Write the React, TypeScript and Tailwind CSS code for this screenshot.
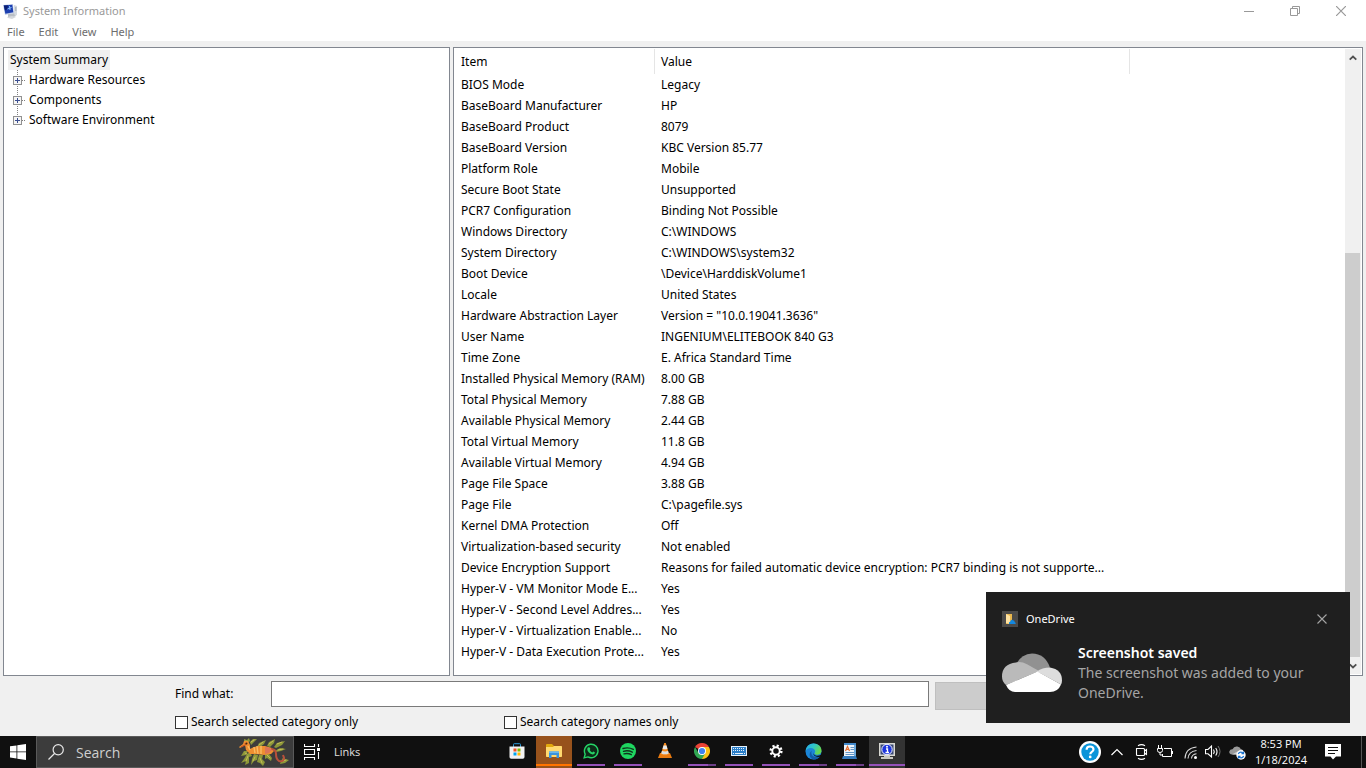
import type { ReactNode } from "react";

const rows: [string, string][] = [
  ["BIOS Mode", "Legacy"],
  ["BaseBoard Manufacturer", "HP"],
  ["BaseBoard Product", "8079"],
  ["BaseBoard Version", "KBC Version 85.77"],
  ["Platform Role", "Mobile"],
  ["Secure Boot State", "Unsupported"],
  ["PCR7 Configuration", "Binding Not Possible"],
  ["Windows Directory", "C:\\WINDOWS"],
  ["System Directory", "C:\\WINDOWS\\system32"],
  ["Boot Device", "\\Device\\HarddiskVolume1"],
  ["Locale", "United States"],
  ["Hardware Abstraction Layer", 'Version = "10.0.19041.3636"'],
  ["User Name", "INGENIUM\\ELITEBOOK 840 G3"],
  ["Time Zone", "E. Africa Standard Time"],
  ["Installed Physical Memory (RAM)", "8.00 GB"],
  ["Total Physical Memory", "7.88 GB"],
  ["Available Physical Memory", "2.44 GB"],
  ["Total Virtual Memory", "11.8 GB"],
  ["Available Virtual Memory", "4.94 GB"],
  ["Page File Space", "3.88 GB"],
  ["Page File", "C:\\pagefile.sys"],
  ["Kernel DMA Protection", "Off"],
  ["Virtualization-based security", "Not enabled"],
  ["Device Encryption Support", "Reasons for failed automatic device encryption: PCR7 binding is not supporte..."],
  ["Hyper-V - VM Monitor Mode E...", "Yes"],
  ["Hyper-V - Second Level Addres...", "Yes"],
  ["Hyper-V - Virtualization Enable...", "No"],
  ["Hyper-V - Data Execution Prote...", "Yes"],
];

function TitleIcon() {
  return (
    <svg width="16" height="16" viewBox="0 0 16 16" aria-hidden="true">
      <path d="M5 10l7-1 1 3-5 2-3-1z" fill="#b9bec4" />
      <path d="M4 13l5-1 4 1-4 2-4-1z" fill="#d5d8dc" />
      <path d="M0 1l10-1 1 9-9 2z" fill="#c3cfe8" />
      <path d="M.8 1.500L9.300.8l1 7.400-8 1.500z" fill="#1d3fb0" />
      <path d="M.8 1.500L5 1.200 4.500 5 2 6.500z" fill="#0c2173" />
      <path d="M6.500 2l.5 4M4.500 5l4-1.500" stroke="#8cc4ff" strokeWidth="1" />
      <path d="M11 1l3 1v9l-2 1-1-3z" fill="#d5dae0" />
      <path d="M12 4h1.500M12 6h1.500" stroke="#8d98a4" />
    </svg>
  );
}

function Expander({ last }: { last: boolean }) {
  return (
    <svg width="19" height="20" viewBox="0 0 19 20" aria-hidden="true" shapeRendering="crispEdges">
      <path d={last ? "M9.5 0V6" : "M9.5 0V20"} stroke="#808080" strokeDasharray="1 1" />
      <path d="M14 10.5h4" stroke="#808080" strokeDasharray="1 1" />
      <rect x="5.500" y="6.500" width="8" height="8" fill="#f6f6f6" stroke="#919191" />
      <path d="M7 10.500h5M9.500 8v5" stroke="#3c4f91" />
    </svg>
  );
}

function StoreIcon() {
  return (
    <svg width="16" height="16" viewBox="0 0 16 16" aria-hidden="true">
      <path d="M4.500 4V1.500q0-.8.8-.8h5.400q.8 0 .8.800V4" fill="none" stroke="#2d9ad8" />
      <path d="M.5 3.500h15V14q0 1.700-1.700 1.700H2.200Q.5 15.700.5 14z" fill="#f2f2f2" />
      <path d="M4.500 5.500h3v3h-3z" fill="#f25022" />
      <path d="M8.500 5.500h3v3h-3z" fill="#7fba00" />
      <path d="M4.500 9.500h3v3h-3z" fill="#00a4ef" />
      <path d="M8.500 9.500h3v3h-3z" fill="#ffb900" />
    </svg>
  );
}

function FolderIcon() {
  return (
    <svg width="16" height="16" viewBox="0 0 16 16" aria-hidden="true">
      <path d="M0 2q0-1 1-1h5l2 2h7q1 0 1 1v9q0 1-1 1H1q-1 0-1-1z" fill="#e2a90d" />
      <path d="M0 4h7l1-1h7q1 0 1 1v9q0 1-1 1H1q-1 0-1-1z" fill="#ffd970" />
      <path d="M3 8.500h10V15h-2.500v-3h-5v3H3z" fill="#3a93dd" />
      <path d="M3 8.500h10v1.500H3z" fill="#67b7f0" />
    </svg>
  );
}

function WhatsAppIcon() {
  return (
    <svg width="16" height="16" viewBox="0 0 17 17" aria-hidden="true">
      <path d="M1.200 15.800l1.100-4A7.200 7.200 0 1 1 5.200 14.800z" fill="#0d2b18" stroke="#25d366" strokeWidth="1.500" />
      <path d="M5.800 4.500l1.300.2.7 1.700-.7 1c.7 1.300 1.500 2 2.800 2.600l1-1 1.700.8c.2 1.500-1 2.400-2.400 2.300-3-.5-5.500-3-5.700-5.400 0-1 .5-1.800 1.300-2.200z" fill="#25d366" />
    </svg>
  );
}

function SpotifyIcon() {
  return (
    <svg width="16" height="16" viewBox="0 0 16 16" aria-hidden="true">
      <circle cx="8" cy="8" r="8" fill="#1ed760" />
      <path d="M3 5.500q5.500-1.700 10.300.9M3.500 8.300q4.700-1.300 8.800.9M4 10.900q4-1 7.300.8" fill="none" stroke="#10331c" strokeWidth="1.400" strokeLinecap="round" />
    </svg>
  );
}

function VlcIcon() {
  return (
    <svg width="16" height="16" viewBox="0 0 16 16" aria-hidden="true">
      <path d="M3 10h10l2 5H1z" fill="#e87a10" />
      <path d="M7.200 0h1.600L12 11q-4 2.500-8 0z" fill="#f58a1c" />
      <path d="M6.500 2.500h3l1 3.200q-2.500 1-5 0z" fill="#e9e9e9" />
      <path d="M5 7.800q3 1.200 6 0l.8 2.600q-3.800 1.700-7.600 0z" fill="#dedede" />
    </svg>
  );
}

function ChromeIcon() {
  return (
    <svg width="16" height="16" viewBox="0 0 16 16" aria-hidden="true">
      <path d="M8 8L1.070 4A8 8 0 0 1 14.930 4z" fill="#e94235" />
      <path d="M8 8V4h6.930A8 8 0 0 1 8 16z" fill="#fbc116" />
      <path d="M1.070 4L4.540 10 8 12l3.460-2L8 16A8 8 0 0 1 1.070 4z" fill="#31a753" />
      <circle cx="8" cy="8" r="4" fill="#fff" />
      <circle cx="8" cy="8" r="3.100" fill="#3f83f0" />
    </svg>
  );
}

function KeyboardIcon() {
  return (
    <svg width="16" height="10" viewBox="0 0 16 10" aria-hidden="true" shapeRendering="crispEdges">
      <rect width="16" height="10" fill="#e7f2fb" />
      <rect x="1" y="1" width="14" height="8" fill="#2b7fc9" />
      <path d="M2 2.500h12M2 4.500h12" stroke="#e7f2fb" strokeDasharray="1 1" />
      <path d="M2 7.500h1M4 7.500h8M13 7.500h1" stroke="#e7f2fb" />
    </svg>
  );
}

function GearIcon() {
  return (
    <svg width="14" height="14" viewBox="0 0 14 14" aria-hidden="true">
      <circle cx="7" cy="7" r="5.300" fill="none" stroke="#fff" strokeWidth="2.600" strokeDasharray="2.100 2.060" />
      <circle cx="7" cy="7" r="3.700" fill="none" stroke="#fff" strokeWidth="1.900" />
    </svg>
  );
}

function EdgeIcon() {
  return (
    <svg width="17" height="17" viewBox="0 0 17 17" aria-hidden="true">
      <defs>
        <linearGradient id="edge-top" x1="0" y1="0" x2="1" y2="0.500">
          <stop offset="0" stopColor="#25a9e8" />
          <stop offset="0.500" stopColor="#2fc6c8" />
          <stop offset="1" stopColor="#68d84a" />
        </linearGradient>
      </defs>
      <circle cx="8.500" cy="8.500" r="8" fill="#1b86d8" />
      <path d="M.6 8C1 3.500 4.500.5 8.500.5c4.600 0 8 3.200 8 7 0 3-2.500 4.200-4.500 4.200-1.600 0-2.500-.5-2.500-1.200 0-.6.700-.8.700-2C10.200 6.500 8.200 5 5.800 5 3.200 5 1.200 6.500.6 8z" fill="url(#edge-top)" />
      <path d="M6.800 7.500c-1.400 3 .4 6.500 4.400 6.500 1.700 0 3-.4 4.100-1.100-1.500 2.400-4 3.600-6.800 3.600-4-1-5.500-6-1.700-9z" fill="#125ba6" />
      <path d="M8.500 8.500c-.8 2.700 1.300 4.200 3.700 4.200 1.500 0 2.900-.5 4.300-1.500V13.200c-4.500 2-9.400-.2-8-4.700z" fill="#111" />
    </svg>
  );
}

function WordPadIcon() {
  return (
    <svg width="16" height="16" viewBox="0 0 16 16" aria-hidden="true">
      <path d="M2 0h12v13H2z" fill="#eef5fb" />
      <path d="M2 0h12v2H2z" fill="#4289cb" />
      <path d="M12 2h2v11h-2z" fill="#6caadd" />
      <path d="M1 13h13l1 3H0z" fill="#347abc" />
      <path d="M3.500 8L5.500 3.500 7.500 8M4.300 6.500h2.500" stroke="#e76d2d" fill="none" strokeWidth="1.200" />
      <path d="M8.500 4.500H12M8.500 6.500H12M3.500 9.500H12M3.500 11.500H12" stroke="#6597c6" />
    </svg>
  );
}

function SysInfoIcon() {
  return (
    <svg width="16" height="16" viewBox="0 0 16 16" aria-hidden="true">
      <path d="M0 0h16v13H0z" fill="#d8d8d2" />
      <path d="M1.500 1.500h13v10h-13z" fill="#3b4a78" />
      <path d="M5 13h6v1h3v2H2v-2h3z" fill="#c8c8c0" />
      <circle cx="8" cy="6.500" r="5.200" fill="#1d35dc" stroke="#e9edff" />
      <path d="M7 6h1.500v3.500M6.500 9.500h3.500" stroke="#fff" strokeWidth="1.300" fill="none" />
      <circle cx="8" cy="3.700" r="1" fill="#fff" />
    </svg>
  );
}

function SeaDragon() {
  return (
    <svg width="50" height="30" viewBox="0 0 50 30" aria-hidden="true">
      <g fill="#8d9738">
        <path d="M5 5l0-3 3 1 2-2 1 3-2 2zM11 5l3-3 4 0-3 3-3 3zM18 10l2-4 7-3-2 4-5 4zM28 9l2-4 6-3-1 4-4 4zM35 10l3-4 8-2-3 4-6 3zM36 14l5-3 6 1-5 2-5 1z" />
        <path d="M5 14l4 0-2 4-5 1zM8 17l3-2 2 4-3 1 0 6-4 2 1-4-5 2 3-4zM15 17l4 1-1 5-3 1-3 4 1-6zM20 18l4 0-1 4 3 3-2 4-3-3-3-1zM26 17l4 0 3 4-1 3-4-3-2 1zM42 24l3-5 1 3 4 1-4 3-5 1z" />
      </g>
      <g fill="none" stroke="#c6bd59" strokeLinecap="round">
        <path d="M7 4l1 2M12 5l3-2M20 8l4-3M30 7l4-3M38 7l5-2M39 13l5-1M6 16l2 1M9 19l-2 5M16 20l-2 4M21 21l2 5M28 18l3 3M44 24l3-1" />
      </g>
      <path d="M0 10l4-3 1-3 4 0 2 4 0 4 4-2 5-1 6 0 7 2 2 3-3 3-7 1-8-1-6 0-4-4-1-5-2 1-3 2z" fill="#ee8f31" />
      <path d="M32 12q5 0 5 5t3 7q5 1 5-3l-1-3" fill="none" stroke="#b9503b" strokeWidth="2" />
      <path d="M26 10q5 0 7 3l-3 3-4 1z" fill="#dd7456" />
      <path d="M15 10l1 6M18 9l1 8M22 9v8M9 9l2 4" stroke="#f8bb61" strokeWidth="1.400" fill="none" />
      <path d="M2 10l4-2M6 6l1 2" stroke="#cf5520" strokeWidth="1.200" />
      <circle cx="7.500" cy="6.500" r="1" fill="#43260c" />
    </svg>
  );
}

type App = { label: string; icon: ReactNode; state: "none" | "one" | "many" | "alert" | "active" };

const apps: App[] = [
  { label: "Microsoft Store", icon: <StoreIcon />, state: "none" },
  { label: "File Explorer", icon: <FolderIcon />, state: "alert" },
  { label: "WhatsApp", icon: <WhatsAppIcon />, state: "one" },
  { label: "Spotify", icon: <SpotifyIcon />, state: "one" },
  { label: "VLC media player", icon: <VlcIcon />, state: "none" },
  { label: "Google Chrome", icon: <ChromeIcon />, state: "many" },
  { label: "On-Screen Keyboard", icon: <KeyboardIcon />, state: "one" },
  { label: "Settings", icon: <GearIcon />, state: "one" },
  { label: "Microsoft Edge", icon: <EdgeIcon />, state: "many" },
  { label: "WordPad", icon: <WordPadIcon />, state: "many" },
  { label: "System Information", icon: <SysInfoIcon />, state: "active" },
];

function TaskButton({ app }: { app: App }) {
  const tile = app.state === "alert" ? "bg-[#97521c]" : app.state === "active" ? "bg-[#333333]" : "";
  return (
    <button aria-label={app.label} className={`flex h-8 w-9 flex-col items-center pb-0.5 ${tile}`}>
      <span className="flex h-7 shrink-0 items-center justify-center pt-0.5">{app.icon}</span>
      {app.state === "alert" && <span className="h-0.5 w-full bg-[#ff7300]" />}
      {app.state === "active" && <span className="h-0.5 w-full bg-[#9451b8]" />}
      {app.state === "one" && <span className="h-0.5 w-7 bg-[#9451b8]" />}
      {app.state === "many" && (
        <span className="flex h-0.5 w-7">
          <span className="flex-1 bg-[#9451b8]" />
          <span className="w-2 bg-[#6e3f88]" />
        </span>
      )}
    </button>
  );
}

function CheckOption({ label, className }: { label: string; className?: string }) {
  return (
    <label className={`flex items-center gap-[3px] ${className ?? ""}`}>
      <input type="checkbox" className="size-[13px] shrink-0 appearance-none border border-[#333] bg-white checked:bg-[#0078d7]" />
      {label}
    </label>
  );
}

function Toast() {
  return (
    <aside className="absolute right-4 bottom-[45px] flex h-[131px] w-[364px] flex-col bg-[#1f1f1f] px-4 text-white">
      <div className="flex h-[51px] items-center gap-2 pt-[3px] text-[11px]">
        <svg width="16" height="16" viewBox="0 0 16 16" aria-hidden="true">
          <path d="M0 0h16v16H0z" fill="#4b4a49" />
          <path d="M4 3h6v10H4z" fill="#e8b64c" />
          <path d="M4 3l4 2v8l-4-1z" fill="#ffe2a0" />
          <path d="M7 13q-.8-2 1.300-2.500Q9 8 11 9.300q1.800 0 1.700 1.700 1.200.3 1 2z" fill="#1388df" />
        </svg>
        <span>OneDrive</span>
        <button aria-label="Dismiss notification" className="mr-[2px] ml-auto flex size-5 items-center justify-center">
          <svg width="10" height="10" viewBox="0 0 10 10" aria-hidden="true">
            <path d="M.5.500l9 9M9.500.500l-9 9" stroke="#a5a5a5" strokeWidth="1.100" />
          </svg>
        </button>
      </div>
      <div className="flex gap-4">
        <svg width="60" height="40" viewBox="0 0 60 40" className="mt-[10px]" aria-hidden="true">
          <path d="M14 11Q20 .5 30 .5q13 0 18 14L37 20z" fill="#919191" />
          <path d="M14 9.500q5-1.500 11 1.800L37 18 4 32q-4-3-4-8.500Q0 11 14 9.500z" fill="#bababa" />
          <path d="M35 18.500q5-4 13-4 12 2 12 13 0 2-1 4z" fill="#dddddd" />
          <path d="M35.500 18.500L59 31.500Q56 39 48 39H13Q7 39 4 32z" fill="#fff" />
        </svg>
        <div className="text-[14px] leading-5">
          <h2 className="font-semibold">Screenshot saved</h2>
          <p className="w-[240px] text-[#a5a5a5]">The screenshot was added to your OneDrive.</p>
        </div>
      </div>
    </aside>
  );
}

function Tray() {
  return (
    <div className="ml-auto flex h-8 items-center text-white">
      <button aria-label="Get help" className="mr-[9px]">
        <svg width="22" height="22" viewBox="0 0 22 22" aria-hidden="true">
          <circle cx="11" cy="11" r="11" fill="#fff" />
          <circle cx="11" cy="11" r="8.700" fill="#0a94d9" />
          <path d="M7.600 8.700q0-3.200 3.400-3.200t3.500 2.800q0 1.600-1.700 2.600-1.500.9-1.500 2.400" fill="none" stroke="#fff" strokeWidth="2.200" />
          <circle cx="11.200" cy="15.900" r="1.400" fill="#fff" />
        </svg>
      </button>
      <button aria-label="Show hidden icons" className="mr-[11px]">
        <svg width="14" height="16" viewBox="0 0 14 16" aria-hidden="true">
          <path d="M1.500 11L7 5.500l5.500 5.500" fill="none" stroke="#fff" strokeWidth="1.200" />
        </svg>
      </button>
      <button aria-label="Meet now" className="mr-2">
        <svg width="14" height="16" viewBox="0 0 14 16" aria-hidden="true">
          <path d="M1.500 4.500h7q1 0 1 1v5q0 1-1 1h-6q-1 0-1-1zM9.500 7l2-1.500v5L9.500 9M3 1.700Q6.500-.5 10 1.700M3 14.300q3.500 2.200 7 0" fill="none" stroke="#fff" strokeWidth="1.100" />
        </svg>
      </button>
      <button aria-label="Battery" className="mr-[11px]">
        <svg width="16" height="16" viewBox="0 0 16 16" aria-hidden="true">
          <path d="M7 4.500h7.500v8h-9V10M15.500 7v3M1.500 1v3M4.500 1v3M.5 4.500h5v2q0 2-2.500 2t-2.500-2zM3 8.500V11h2" fill="none" stroke="#fff" />
        </svg>
      </button>
      <button aria-label="Network" className="mr-[7px]">
        <svg width="14" height="16" viewBox="0 0 14 16" aria-hidden="true">
          <path d="M1 14.500Q1.500 4 12.500 3M4 14.500Q4.500 7.500 12.500 6.500M7.500 14.500q.3-4 5-4.700" fill="none" stroke="#ddd" strokeWidth="1.100" />
          <circle cx="11.500" cy="13.500" r="1.500" fill="#fff" />
        </svg>
      </button>
      <button aria-label="Volume" className="mr-2">
        <svg width="16" height="16" viewBox="0 0 16 16" aria-hidden="true">
          <path d="M.5 5.500H3L6.500 2v11L3 9.800H.5z" fill="none" stroke="#fff" strokeWidth="1.100" />
          <path d="M8.500 5.500q1.500 2.200 0 4.500M10.700 4q2.600 3.700 0 7.500" fill="none" stroke="#fff" strokeWidth="1.100" />
          <path d="M13 2q4 5.500 0 11" fill="none" stroke="#777" />
        </svg>
      </button>
      <button aria-label="OneDrive sync" className="mr-[7px]">
        <svg width="18" height="16" viewBox="0 0 18 16" aria-hidden="true">
          <path d="M3 10.500Q0 10 .3 7.500 1 5 3.500 5.200 5 2 8.300 2.500q3 .5 3.700 3 2 0 2.500 2v3z" fill="#999" />
          <path d="M3 10.500l9-5q2 0 2.500 2v3z" fill="#d0d0d0" />
          <circle cx="12" cy="11" r="4.700" fill="#fff" />
          <path d="M9.300 10q1-2.200 3.500-1.700l1.500 1M14.700 12q-1 2.200-3.500 1.700l-1.500-1M14.500 7.500v2h-2M9.500 14.500v-2h2" fill="none" stroke="#1a73d0" strokeWidth="1.300" />
        </svg>
      </button>
      <div className="mr-[17px] w-[54px] text-center text-[11px] leading-4 whitespace-nowrap">
        <div>8:53 PM</div>
        <div>1/18/2024</div>
      </div>
      <button aria-label="Notifications" className="mr-5">
        <svg width="16" height="16" viewBox="0 0 16 16" aria-hidden="true">
          <path d="M0 0h16v12.500h-5L8 15.500l-2.500-3H0z" fill="#fff" />
          <path d="M3 3.500h10M3 6.500h10M3 9.500h7" stroke="#111" />
        </svg>
      </button>
      <span className="h-8 w-[5px] border-l border-[#555]" />
    </div>
  );
}

export default function App() {
  return (
    <div className="relative flex h-screen flex-col overflow-hidden bg-[#f0f0f0] font-['Noto_Sans','Open_Sans',sans-serif] text-[12px] text-black">
      <header className="bg-white">
        <div className="flex h-[23px] items-center text-[#999]">
          <span className="mr-1 ml-[3px]"><TitleIcon /></span>
          <h1 className="text-[11px]">System Information</h1>
          <div className="ml-auto flex pr-[2px] pb-[2px]">
            <button aria-label="Minimize" className="flex h-5 w-[46px] items-center justify-center">
              <svg width="10" height="10" aria-hidden="true"><path d="M0 5.500h10" stroke="#999" /></svg>
            </button>
            <button aria-label="Restore" className="flex h-5 w-[46px] items-center justify-center">
              <svg width="10" height="10" aria-hidden="true"><path d="M.5 2.500h7v7h-7zM2.500 2.500v-2h7v7h-2" fill="none" stroke="#999" /></svg>
            </button>
            <button aria-label="Close" className="flex h-5 w-[46px] items-center justify-center">
              <svg width="10" height="10" aria-hidden="true"><path d="M0 0l10 10M10 0L0 10" stroke="#999" strokeWidth="1.200" /></svg>
            </button>
          </div>
        </div>
        <nav className="flex h-[18px] items-center gap-[14px] px-[7px] pt-px text-[11px] text-[#6d6d6d]">
          <button>File</button>
          <button>Edit</button>
          <button>View</button>
          <button>Help</button>
        </nav>
      </header>

      <main className="flex min-h-0 flex-1 gap-[3px] px-[3px] pt-[6px]">
        <section aria-label="Categories" className="w-[33%] max-w-[447px] min-w-[200px] border border-[#828790] bg-white pt-[2px] pl-1">
          <div className="flex h-5 items-center">
            <button className="h-5 bg-[#f0f0f0] px-[2px]">System Summary</button>
          </div>
          <ul>
            {["Hardware Resources", "Components", "Software Environment"].map((name, i) => (
              <li key={name} className="flex h-5 items-center">
                <button aria-label={`Expand ${name}`}><Expander last={i === 2} /></button>
                <span className="pl-[2px]">{name}</span>
              </li>
            ))}
          </ul>
        </section>

        <section aria-label="System summary" className="flex min-w-0 flex-1 border border-[#828790] bg-white p-px">
          <div className="min-w-0 flex-1 overflow-hidden">
            <table className="table-fixed border-separate border-spacing-0 text-left whitespace-nowrap">
              <colgroup>
                <col className="w-[200px]" />
                <col className="w-[475px]" />
              </colgroup>
              <thead>
                <tr className="h-[25px]">
                  <th className="border-r border-[#e5e5e5] p-0 pl-[6px] font-normal">Item</th>
                  <th className="border-r border-[#e5e5e5] p-0 pl-[6px] font-normal">Value</th>
                </tr>
              </thead>
              <tbody>
                {rows.map(([item, value]) => (
                  <tr key={item} className="h-[21px]">
                    <td className="p-0 pl-[6px]">{item}</td>
                    <td className="p-0 pl-[6px]">{value}</td>
                  </tr>
                ))}
              </tbody>
            </table>
          </div>
          <div className="flex w-4 flex-col bg-[#f0f0f0]">
            <button aria-label="Scroll up" className="flex h-[17px] items-center justify-center">
              <svg width="8" height="6" aria-hidden="true"><path d="M.7 4.700L4 1.500l3.300 3.200" fill="none" stroke="#505050" strokeWidth="1.800" /></svg>
            </button>
            <div className="flex flex-1 flex-col">
              <div className="grow-[187]" />
              <div className="mr-px grow-[404] bg-[#cdcdcd]" />
            </div>
            <button aria-label="Scroll down" className="flex h-[17px] items-center justify-center">
              <svg width="8" height="6" aria-hidden="true"><path d="M.7 1.300L4 4.500l3.300-3.200" fill="none" stroke="#505050" strokeWidth="1.800" /></svg>
            </button>
          </div>
        </section>
      </main>

      <form className="px-[175px] pt-[5px] pb-1" onSubmit={(e) => e.preventDefault()}>
        <div className="flex h-7 items-start gap-[6px]">
          <label htmlFor="find" className="w-[90px] shrink-0 leading-[26px]">Find what:</label>
          <input id="find" type="text" className="h-[26px] min-w-0 flex-1 border border-[#7a7a7a] bg-white px-1 outline-none" />
          <button type="submit" aria-label="Find" disabled className="mt-px h-7 w-[125px] border border-[#bfbfbf] bg-[#cccccc]" />
          <button type="button" aria-label="Close Find" className="mt-px h-7 w-[125px] border border-[#bfbfbf] bg-[#cccccc]" />
        </div>
        <div className="mt-[3px] flex h-5 items-center">
          <CheckOption label="Search selected category only" className="w-[329px]" />
          <CheckOption label="Search category names only" />
        </div>
      </form>

      <footer className="flex h-8 shrink-0 bg-[#101010] font-['Open_Sans',sans-serif]">
        <div className="flex w-[499px] shrink-0 items-center">
          <button aria-label="Start" className="flex h-8 w-9 items-center justify-center">
            <svg width="16" height="16" viewBox="0 0 16 16" aria-hidden="true">
              <path d="M0 2.300L6.500 1.400V7.500H0zM7.300 1.300L16 0v7.500H7.300zM0 8.300h6.500v6.200L0 13.600zM7.300 8.300H16V16l-8.700-1.300z" fill="#fff" />
            </svg>
          </button>
          <label className="flex h-8 w-[258px] items-center border border-[#5a5a5a] bg-[#3c3c3c] pr-1 pl-[11px]">
            <svg width="16" height="16" viewBox="0 0 16 16" aria-hidden="true">
              <circle cx="10.200" cy="5.800" r="5.100" fill="none" stroke="#e8e8e8" strokeWidth="1.200" />
              <path d="M6.500 9.500L.500 15.500" stroke="#e8e8e8" strokeWidth="1.300" />
            </svg>
            <input type="text" aria-label="Search" placeholder="Search" className="ml-3 min-w-0 flex-1 bg-transparent text-[14px] text-white outline-none placeholder:text-[#cfcfcf]" />
            <SeaDragon />
          </label>
          <button aria-label="Task View" className="ml-[10px]">
            <svg width="16" height="16" viewBox="0 0 16 16" aria-hidden="true">
              <path d="M.5 0v2.500h10V0M.5 5.500h10v5H.5zM.5 16v-2.500h10V16M14.500 0v3M14.500 8v7" fill="none" stroke="#fff" strokeWidth="1.100" />
              <path d="M13 4h3v3h-3z" fill="#fff" />
            </svg>
          </button>
          <span className="ml-[14px] text-[11px] text-[#e0e0e0]">Links</span>
        </div>
        <div className="flex gap-px">
          {apps.map((app) => (
            <TaskButton key={app.label} app={app} />
          ))}
        </div>
        <Tray />
      </footer>

      <Toast />
    </div>
  );
}
